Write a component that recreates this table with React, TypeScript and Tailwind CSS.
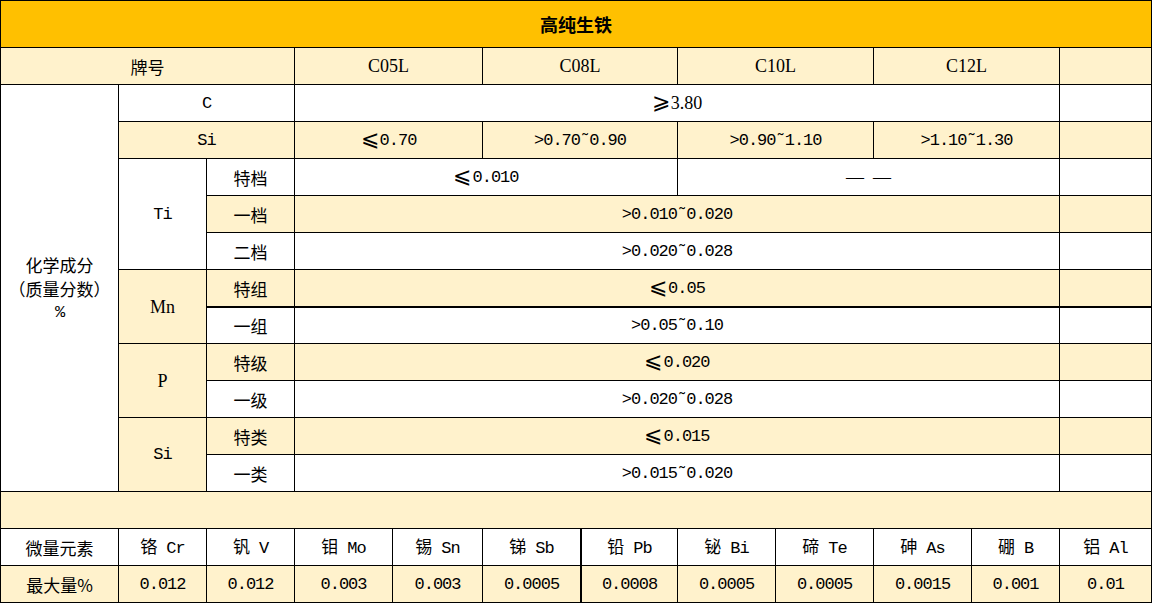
import type { ReactNode } from "react";

const LIGHT = "bg-[#fff2cc]";
const WHITE = "bg-white";

// text helpers
const Cn = ({ children }: { children: ReactNode }) => (
  <span className="font-['Noto_Sans_CJK_SC',sans-serif] text-[17px] leading-none">{children}</span>
);
const Mono = ({ children }: { children: ReactNode }) => (
  <span className="font-['Liberation_Mono',monospace] text-[17px] tracking-[-1px] leading-none">{children}</span>
);
const Serif = ({ children }: { children: ReactNode }) => (
  <span className="font-['Liberation_Serif',serif] text-[18px] leading-none">{children}</span>
);
const Sign = ({ children }: { children: ReactNode }) => (
  <span className="font-['Noto_Sans_CJK_SC',sans-serif] text-[22px] leading-none mr-[1px] -translate-y-[4px]">{children}</span>
);

// value like "≤0.70" or ">0.70~0.90"
const Val = ({ v }: { v: string }) => {
  const sign = v[0] === "≤" || v[0] === "≥" ? v[0] : "";
  const rest = (sign ? v.slice(1) : v).replace("~", "˜");
  return (
    <span className="flex items-center">
      {sign && <Sign>{sign === "≤" ? "⩽" : "⩾"}</Sign>}
      <Mono>{rest}</Mono>
    </span>
  );
};

interface CellProps {
  className?: string;
  bg?: string;
  children?: ReactNode;
}

const Cell = ({ className = "", bg = WHITE, children }: CellProps) => (
  <div className={`flex items-center justify-center text-black ${bg} ${className}`}>{children}</div>
);

const elements = [
  { cn: "铬", en: "Cr", v: "0.012" },
  { cn: "钒", en: "V", v: "0.012" },
  { cn: "钼", en: "Mo", v: "0.003" },
  { cn: "锡", en: "Sn", v: "0.003" },
  { cn: "锑", en: "Sb", v: "0.0005" },
  { cn: "铅", en: "Pb", v: "0.0008" },
  { cn: "铋", en: "Bi", v: "0.0005" },
  { cn: "碲", en: "Te", v: "0.0005" },
  { cn: "砷", en: "As", v: "0.0015" },
  { cn: "硼", en: "B", v: "0.001" },
  { cn: "铝", en: "Al", v: "0.01" },
];

export default function App() {
  return (
    <div className="w-[1153px] h-[603px] bg-white">
      <div className="grid w-[1152px] gap-px bg-black p-px grid-cols-[117px_87px_87px_97px_89px_97px_96px_97px_97px_97px_87px_91px] grid-rows-[46px_repeat(15,36px)]">
        {/* title */}
        <Cell bg="bg-[#ffc000]" className="col-span-12">
          <span className="font-['Noto_Sans_CJK_SC',sans-serif] text-[18px] font-bold leading-none">高纯生铁</span>
        </Cell>

        {/* grade header */}
        <Cell bg={LIGHT} className="col-span-3"><Cn>牌号</Cn></Cell>
        {["C05L", "C08L", "C10L", "C12L"].map((g) => (
          <Cell key={g} bg={LIGHT} className="col-span-2"><Serif>{g}</Serif></Cell>
        ))}
        <Cell bg={LIGHT} />

        {/* chemical composition */}
        <Cell className="row-span-11">
          <div className="flex flex-col items-center gap-[7px]">
            <Cn>化学成分</Cn>
            <Cn>（质量分数）</Cn>
            <Mono>%</Mono>
          </div>
        </Cell>

        {/* C */}
        <Cell className="col-span-2"><Mono>C</Mono></Cell>
        <Cell className="col-span-8">
          <span className="flex items-center"><Sign>⩾</Sign><Serif>3.80</Serif></span>
        </Cell>
        <Cell />

        {/* Si */}
        <Cell bg={LIGHT} className="col-span-2"><Mono>Si</Mono></Cell>
        {["≤0.70", ">0.70~0.90", ">0.90~1.10", ">1.10~1.30"].map((v) => (
          <Cell key={v} bg={LIGHT} className="col-span-2"><Val v={v} /></Cell>
        ))}
        <Cell bg={LIGHT} />

        {/* Ti */}
        <Cell className="row-span-3"><Mono>Ti</Mono></Cell>
        <Cell><Cn>特档</Cn></Cell>
        <Cell className="col-span-4"><Val v="≤0.010" /></Cell>
        <Cell className="col-span-4">
          <span className="font-['Liberation_Serif',serif] text-[18px] leading-none">—&nbsp;&nbsp;—</span>
        </Cell>
        <Cell />

        <Cell bg={LIGHT}><Cn>一档</Cn></Cell>
        <Cell bg={LIGHT} className="col-span-8"><Val v=">0.010~0.020" /></Cell>
        <Cell bg={LIGHT} />

        <Cell><Cn>二档</Cn></Cell>
        <Cell className="col-span-8"><Val v=">0.020~0.028" /></Cell>
        <Cell />

        {/* Mn */}
        <Cell bg={LIGHT} className="row-span-2"><Serif>Mn</Serif></Cell>
        <Cell bg={LIGHT}><Cn>特组</Cn></Cell>
        <Cell bg={LIGHT} className="col-span-8"><Val v="≤0.05" /></Cell>
        <Cell bg={LIGHT} />

        <Cell className="border-t border-black"><Cn>一组</Cn></Cell>
        <Cell className="col-span-8 border-t border-black"><Val v=">0.05~0.10" /></Cell>
        <Cell className="border-t border-black" />

        {/* P */}
        <Cell bg={LIGHT} className="row-span-2"><Serif>P</Serif></Cell>
        <Cell bg={LIGHT}><Cn>特级</Cn></Cell>
        <Cell bg={LIGHT} className="col-span-8"><Val v="≤0.020" /></Cell>
        <Cell bg={LIGHT} />

        <Cell><Cn>一级</Cn></Cell>
        <Cell className="col-span-8"><Val v=">0.020~0.028" /></Cell>
        <Cell />

        {/* Si */}
        <Cell bg={LIGHT} className="row-span-2"><Mono>Si</Mono></Cell>
        <Cell bg={LIGHT}><Cn>特类</Cn></Cell>
        <Cell bg={LIGHT} className="col-span-8"><Val v="≤0.015" /></Cell>
        <Cell bg={LIGHT} />

        <Cell><Cn>一类</Cn></Cell>
        <Cell className="col-span-8"><Val v=">0.015~0.020" /></Cell>
        <Cell />

        {/* spacer */}
        <Cell bg={LIGHT} className="col-span-12" />

        {/* trace elements */}
        <Cell><Cn>微量元素</Cn></Cell>
        {elements.map((e) => (
          <Cell key={e.en} className={e.en === "Pb" ? "border-l border-black" : ""}>
            <span className="flex items-baseline gap-[9px]">
              <Cn>{e.cn}</Cn>
              <Mono>{e.en}</Mono>
            </span>
          </Cell>
        ))}

        <Cell bg={LIGHT}><Cn>最大量%</Cn></Cell>
        {elements.map((e) => (
          <Cell key={e.en} bg={LIGHT} className={e.en === "Pb" ? "border-l border-black" : ""}>
            <Mono>{e.v}</Mono>
          </Cell>
        ))}
      </div>
    </div>
  );
}
